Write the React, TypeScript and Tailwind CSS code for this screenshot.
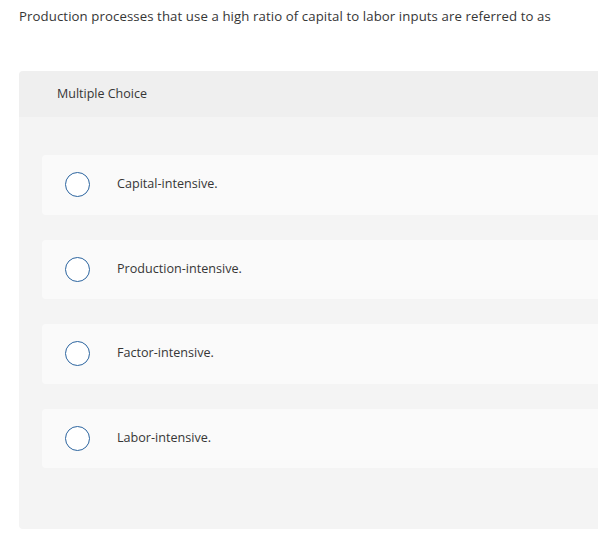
import React from 'react';

const options = ['Capital-intensive.', 'Production-intensive.', 'Factor-intensive.', 'Labor-intensive.'];

export default function App() {
  return (
    <div
      className="w-[598px] h-[552px] overflow-hidden bg-white text-[#363636]"
      style={{ fontFamily: '"Open Sans", Arial, sans-serif' }}
    >
      <p className="pl-[19px] pt-[7px] text-[13.2px] leading-[18px] tracking-[0.1px]">
        Production processes that use a high ratio of capital to labor inputs are referred to as
      </p>

      <div className="ml-[19px] mt-[46px] w-[620px] rounded-[4px] overflow-hidden">
        {/* header */}
        <div className="h-[46px] bg-[#efefef] pl-[38px] flex items-center text-[12.5px]">
          Multiple Choice
        </div>

        {/* options */}
        <div className="bg-[#f4f4f4] pt-[38px] pb-[61px] pl-[23px] flex flex-col gap-[25px]">
          {options.map((opt) => (
            <div key={opt} className="h-[59.5px] bg-[#fafafa] rounded-[4px] flex items-center">
              <span className="ml-[23px] w-[25px] h-[25px] rounded-full border-[1.5px] border-[#2b649f] bg-white shrink-0" />
              <span className="ml-[27px] text-[12.6px]">{opt}</span>
            </div>
          ))}
        </div>
      </div>
    </div>
  );
}
